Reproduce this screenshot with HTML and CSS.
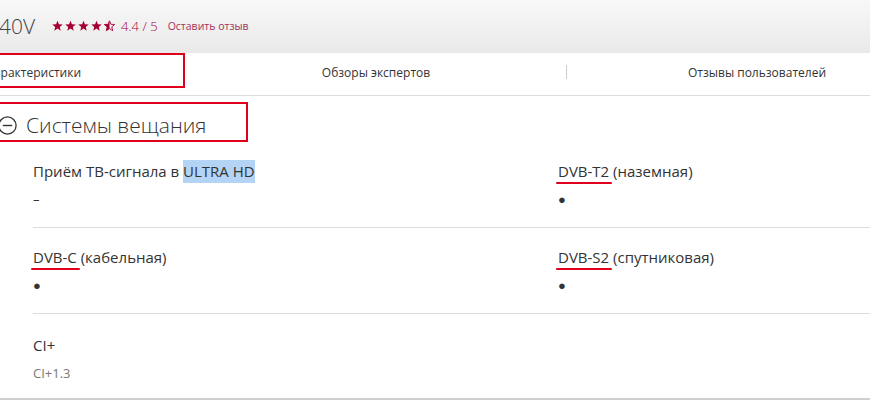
FILE: index.html
```html
<!DOCTYPE html>
<html lang="ru">
<head>
<meta charset="utf-8">
<meta name="viewport" content="width=device-width, initial-scale=1.0">
  <title>Характеристики</title>
  <link rel="stylesheet" href="styles.css">
</head>
<body>

  <div class="шапка">
    <span class="модель">40V</span>
    <span class="звезды">
      <svg width="66" height="12" viewBox="0 0 66 11">
        <defs>
          <path id="st" d="M5.5 0.3 L6.9 3.8 L10.7 4 L7.8 6.4 L8.7 10.2 L5.5 8.1 L2.3 10.2 L3.2 6.4 L0.3 4 L4.1 3.8 Z"/>
          <clipPath id="half"><rect x="0" y="0" width="5.5" height="11"/></clipPath>
        </defs>
        <use href="#st" x="0" fill="#a50034"/>
        <use href="#st" x="13" fill="#a50034"/>
        <use href="#st" x="26" fill="#a50034"/>
        <use href="#st" x="39" fill="#a50034"/>
        <g transform="translate(52 0)">
          <use href="#st" fill="none" stroke="#a50034" stroke-width="0.9"/>
          <use href="#st" fill="#a50034" clip-path="url(#half)"/>
        </g>
      </svg>
    </span>
    <span class="оценка">4.4 / 5</span>
    <a class="отзыв">Оставить отзыв</a>
  </div>

  <div class="вкладки">
    <div class="вкладка первая"><span>Характеристики</span></div>
    <div class="вкладка">Обзоры экспертов</div>
    <div class="разделитель"></div>
    <div class="вкладка">Отзывы пользователей</div>
    <div class="рамка рамка-вкладка"></div>
  </div>

  <div class="раздел">
    <div class="заголовок">
      <svg class="минус" width="19" height="19" viewBox="0 0 19 19">
        <circle cx="9.5" cy="9.5" r="8.6" fill="none" stroke="#333" stroke-width="1.3"/>
        <line x1="4.8" y1="9.5" x2="14.2" y2="9.5" stroke="#333" stroke-width="1.4"/>
      </svg>
      <span>Системы вещания</span>
      <div class="рамка рамка-заголовок"></div>
    </div>

    <div class="строка">
      <div class="ячейка">
        <div class="название">Приём ТВ-сигнала в <span class="выделено">ULTRA HD</span></div>
        <div class="значение">–</div>
      </div>
      <div class="ячейка">
        <div class="название"><span class="подчерк">DVB-T2</span> (наземная)</div>
        <div class="значение">●</div>
      </div>
    </div>

    <div class="строка">
      <div class="ячейка">
        <div class="название"><span class="подчерк">DVB-C</span> (кабельная)</div>
        <div class="значение">●</div>
      </div>
      <div class="ячейка">
        <div class="название"><span class="подчерк">DVB-S2</span> (спутниковая)</div>
        <div class="значение">●</div>
      </div>
    </div>

    <div class="строка последняя">
      <div class="ячейка">
        <div class="название">CI+</div>
        <div class="значение серый">CI+1.3</div>
      </div>
    </div>
  </div>

</body>
</html>
```

FILE: styles.css
```css
* {
  margin: 0;
  padding: 0;
  box-sizing: border-box;
}

body {
  width: 870px;
  height: 400px;
  overflow: hidden;
  background: #ffffff;
  font-family: "Open Sans", "Noto Sans", sans-serif;
  color: #333333;
  border-bottom: 2px solid #cfcfcf;
}

.шапка {
  height: 53px;
  display: flex;
  align-items: center;
  background: linear-gradient(#f8f8f8, #e9e9e9);
  padding-bottom: 2px;
}

.модель {
  font-size: 21px;
  font-weight: 300;
  color: #444444;
  margin-left: -1px;
}

.звезды {
  display: flex;
  margin-left: 17px;
}

.оценка {
  font-size: 13px;
  color: #a50034;
  margin-left: 3px;
  font-weight: 300;
}

.отзыв {
  font-size: 10.5px;
  color: #a3325a;
  margin-left: 10px;
}

.вкладки {
  position: relative;
  height: 43px;
  display: flex;
  align-items: center;
  border-bottom: 1px solid #dddddd;
  background: #ffffff;
  font-size: 12px;
  color: #333333;
  padding-bottom: 4px;
}

.вкладка {
  width: 380px;
  flex-shrink: 0;
  text-align: center;
}

.первая {
  width: 186px;
  text-align: left;
}

.первая span {
  margin-left: -13px;
}

.разделитель {
  width: 1px;
  height: 14px;
  background: #cccccc;
  flex-shrink: 0;
}

.рамка {
  position: absolute;
  border: 2px solid #e0001b;
  pointer-events: none;
}

.рамка-вкладка {
  left: -10px;
  top: 0;
  width: 195px;
  height: 35px;
}

.раздел {
  padding-top: 6px;
}

.заголовок {
  position: relative;
  height: 40px;
  display: flex;
  align-items: center;
  gap: 9px;
  padding-top: 6px;
  font-size: 21px;
  font-weight: 300;
  color: #333333;
  margin-left: -2px;
}

.рамка-заголовок {
  left: -10px;
  top: 0;
  width: 260px;
  height: 40px;
}

.строка {
  display: flex;
  margin-left: 33px;
  padding-top: 19px;
  height: 86px;
  border-bottom: 1px solid #dddddd;
}

.последняя {
  border-bottom: none;
  padding-top: 21px;
}

.ячейка {
  width: 525px;
  flex-shrink: 0;
}

.название {
  font-size: 15px;
  line-height: 20px;
  color: #333333;
}

.значение {
  font-size: 13px;
  line-height: 20px;
  margin-top: 8px;
  color: #333333;
}

.серый {
  color: #777777;
  font-size: 13px;
}

.выделено {
  background: #b4d4f6;
  padding: 1px 0 2px;
}

.подчерк {
  position: relative;
}

.подчерк::after {
  content: "";
  position: absolute;
  left: -2px;
  right: -3px;
  bottom: -3px;
  height: 2px;
  border-radius: 2px;
  background: #e0001b;
}
```
